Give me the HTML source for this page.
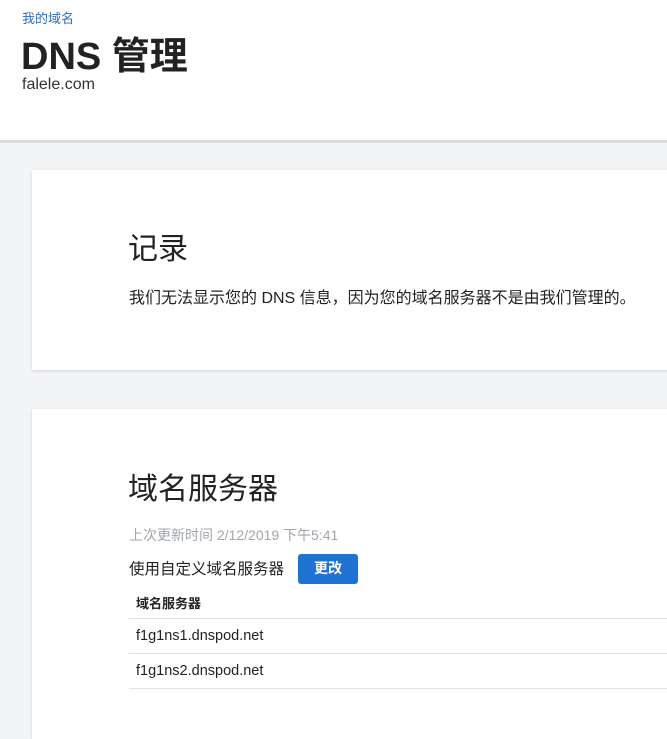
<!DOCTYPE html>
<html><head><meta charset="utf-8"><style>
body{margin:0;width:667px;height:717px;overflow:hidden;background:#f3f4f6;font-family:"Liberation Sans","Noto Sans CJK SC",sans-serif;color:#222;position:relative}
.hdr{position:absolute;left:0;top:0;width:667px;height:140px;background:#fff;border-bottom:3px solid #dcdcdc}
.a{position:absolute;white-space:nowrap}
.card{position:absolute;left:32px;width:660px;background:#fff;box-shadow:0 1px 3px rgba(0,0,0,.12)}
.line{position:absolute;left:129px;width:560px;height:1px;background:#e3e3e3}
</style></head><body>
<div class="hdr">
<div class="a" style="left:22px;top:8px;font-size:13px;color:#2f6fb8">我的域名</div>
<div class="a" style="left:21px;top:35px;font-size:38px;line-height:44px;font-weight:bold;color:#222">DNS 管理</div>
<div class="a" style="left:22px;top:75px;font-size:16px;line-height:20px;color:#333">falele.com</div>
</div>
<div class="card" style="top:170px;height:200px"></div>
<div class="card" style="top:409px;height:330px"></div>
<div class="a" style="left:128px;top:224px;font-size:30px;color:#222">记录</div>
<div class="a" style="left:129px;top:284px;font-size:16px;color:#222">我们无法显示您的 DNS 信息，因为您的域名服务器不是由我们管理的。</div>
<div class="a" style="left:128px;top:464px;font-size:30px;color:#222">域名服务器</div>
<div class="a" style="left:129px;top:525px;font-size:14px;color:#a0a6ad">上次更新时间 2/12/2019 下午5:41</div>
<div class="a" style="left:129px;top:557px;font-size:15.5px;color:#222">使用自定义域名服务器</div>
<div class="a" style="left:298px;top:554px;width:60px;height:30px;background:#1f74d3;border-radius:3px;color:#fff;font-size:14px;font-weight:bold;text-align:center;line-height:29px">更改</div>
<div class="a" style="left:136px;top:593px;font-size:13px;font-weight:bold;color:#222">域名服务器</div>
<div class="line" style="top:618px"></div>
<div class="a" style="left:136px;top:628px;font-size:14.5px;color:#222">f1g1ns1.dnspod.net</div>
<div class="line" style="top:653px"></div>
<div class="a" style="left:136px;top:663px;font-size:14.5px;color:#222">f1g1ns2.dnspod.net</div>
<div class="line" style="top:688px"></div>
</body></html>
